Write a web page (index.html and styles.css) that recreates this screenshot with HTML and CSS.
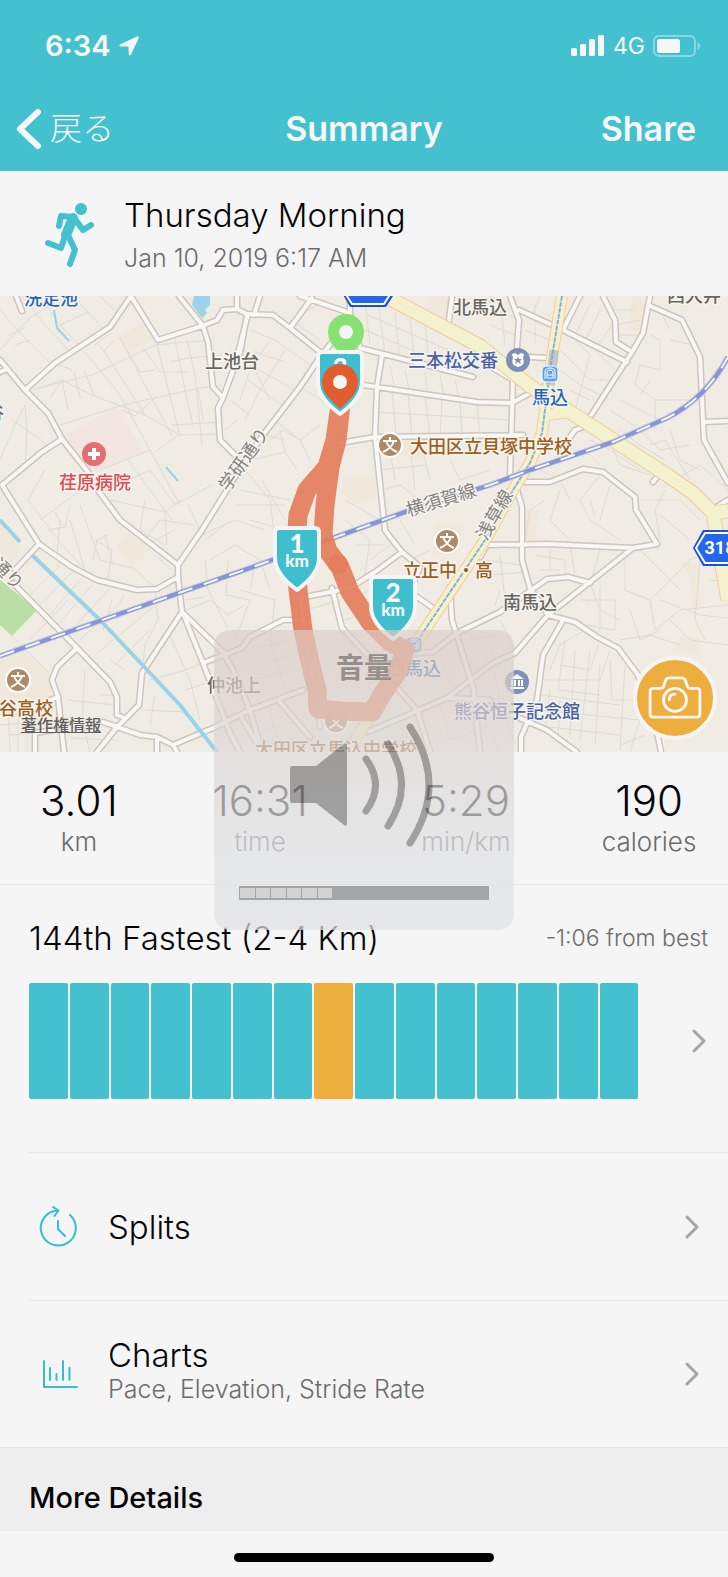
FILE: index.html
```html
<!DOCTYPE html>
<html lang="ja">
<head>
<meta charset="utf-8">
<meta name="viewport" content="width=device-width, initial-scale=1">
<title>Summary</title>
<link rel="stylesheet" href="styles.css">
</head>
<body>
<div class="screen">
  <header class="header">
    <div class="status">
      <div class="status-side">
        <span class="clock">6:34</span>
        <svg class="location" viewBox="0 0 20 20" aria-hidden="true"><path d="M18 .5 1 8.500Q-.5 10 1.500 10.500L9.500 10.500 9.800 18.500Q10.500 20.500 12 18.500L19.800 2Q20 0 18 .5Z"/></svg>
      </div>
      <div class="status-side">
        <svg class="signal" viewBox="0 0 34 22" aria-hidden="true"><rect x="0" y="13" width="6" height="8" rx="1.500"/><rect x="9" y="9" width="6" height="12" rx="1.500"/><rect x="18" y="4" width="6" height="17" rx="1.500"/><rect x="27" y="0" width="6" height="21" rx="1.500"/></svg>
        <span class="network">4G</span>
        <svg class="battery" viewBox="0 0 48 22" aria-hidden="true"><rect class="battery-shell" x="1" y="1" width="41" height="20" rx="5"/><rect x="4" y="4" width="23" height="14" rx="2.500"/><path class="battery-nub" d="M44.500 7q3 1.500 3 4t-3 4z"/></svg>
      </div>
    </div>
    <nav class="nav">
      <button class="back" type="button">
        <svg class="back-arrow" viewBox="0 0 26 42" aria-hidden="true"><path d="M22 4 4 21 22 38"/></svg>戻る</button>
      <h1 class="nav-title">Summary</h1>
      <button class="share" type="button">Share</button>
    </nav>
  </header>

  <main>
    <section class="activity">
      <svg class="runner" viewBox="0 0 52 66" aria-hidden="true">
        <circle cx="37" cy="8" r="6"/>
        <path class="torso" d="M29 17 22 34"/>
        <path class="limb" d="M30 16 17 15 15 25M31 18 39 29 47 24M22 32 17 47 4 42M24 34 31 49 26 63"/>
      </svg>
      <div>
        <h2 class="row-title">Thursday Morning</h2>
        <p class="row-note">Jan 10, 2019 6:17 AM</p>
      </div>
    </section>

    <section class="map" aria-label="Route map">
      <svg class="map-canvas" viewBox="0 296 728 456" preserveAspectRatio="xMidYMid slice">
        <defs>
          <path id="roads" d="M131 296 110 327 55 363 25 390M0 360 25 390 48 413 62 439 88 472 100 493 120 520 178 565M0 372 5 370M62 439 42 452 2 485 39 544 72 567 97 580 137 590 157 589 178 577M131 296 158 340 202 326 217 320 223 310 237 309 247 314 273 315 290 328 320 352M179 296 203 326 208 342 213 387 223 398M248 314 235 365 223 398 218 408 220 440 235 455M237 296V309M16 296 22 311M332 342 318 360 300 387 263 435 233 480 202 530 178 565 178 577 182 612 142 673 139 705 117 727 97 752M183 613 203 663 230 733 240 752M183 613 223 652 233 670 250 710 262 752M203 663 242 648 250 637 283 620 300 620M15 570 39 544M13 583 77 648 110 682 117 697 117 715 125 718M77 648 57 667 52 680 58 697 64 752M103 722 140 735 157 737 173 745 213 728 250 710 303 690M157 737V752M173 745 177 752M35 752V733L53 730M50 700 58 697M260 296 254 315M247 315 240 353M300 296 350 313 360 348 473 377M312 298 290 328M350 296V320M363 385 377 387 477 402 512 403 532 392M382 355 377 387 375 437 385 530 390 537 402 552 375 572 350 588 300 598M402 552 420 567 410 592 433 608M340 443 375 437 523 435M452 296 448 328M510 296 519 320 517 347M519 310 563 330 627 362M580 296 563 330M603 296 615 320 616 342 632 352M650 296 643 333 632 352 588 420M583 427 575 430 568 440M648 305 682 320 700 357 704 440 728 483M704 422 728 421M493 368 513 380 510 477M530 357 548 358M522 482 550 482 583 469 603 472 635 497 636 510 657 544M517 490 522 507 522 560 530 588 548 615M653 482 657 477M728 500 715 508M480 557 487 545 547 544 633 548 657 544M633 548 548 615 515 653 493 663 447 698 368 732M433 652 457 633 500 612 547 579 568 577 590 583M417 653 433 652M548 615 575 622 597 637 618 648 638 675 658 737 661 752M562 622 543 655 537 700 521 737V752M487 706 517 717 547 730 577 752M332 588 342 628 363 650 417 710 430 752M450 587 452 620 473 687 480 752M300 598 308 650 318 707 320 727M280 702 310 737M240 715 262 752M447 698 490 700"/>
          <path id="yellow" d="M385 296 480 346 530 386 567 410 667 475 693 493 713 513 728 600M713 513 728 511"/>
          <path id="avenue" d="M562 296 552 357 542 433 530 463 513 490 487 537 420 637 357 737 350 752M547 415 570 412"/>
          <path id="rail" d="M0 656 250 568 383 520 405 512 490 485 530 470 613 442 667 418Q706 398 728 357"/>
          <path id="shield" d="M-18 -28H18Q22 -28 22 -24V2Q22 18 0 34Q-22 18 -22 2V-24Q-22 -28 -18 -28Z"/>
          <path id="pin" d="M0 -18A18 18 0 0 1 18 0C18 12 8 18 0 27C-8 18-18 12-18 0A18 18 0 0 1 0-18Z"/>
          <g id="school"><circle r="12"/><path d="M-7-4H7M0-8V-4M-4-4Q-1 4 7 7M4-4Q1 4-7 7"/></g>
          <g id="station"><rect x="-8" y="-8" width="16" height="16" rx="4"/><path d="M-3 4V-2Q-3-4 0-4T3-2V4ZM-3 1H3M-5 5V-2Q-5-6 0-6T5-2V5"/></g>
        </defs>

        <rect class="land" y="296" width="728" height="456"/>
        <path class="block" d="M143 322 155 340 127 352 118 338ZM130 533 150 550 133 568 115 545ZM0 525 22 548 7 574 0 565ZM0 658 25 652 45 668 53 673 50 700 0 703ZM345 475 376 477V500L355 504 340 492ZM430 296H448V320L425 308ZM632 296H645L640 332 627 328ZM675 296H700L682 315ZM525 510H540L534 540H524ZM680 560 700 565V605L692 610 690 575ZM680 635 700 638V657L675 650ZM436 523 463 525 458 555H433ZM405 438H425L423 462 400 455Z"/>
        <path class="hospital-area" d="M117 407 144 452 88 473 63 437Z"/>
        <path class="park" d="M0 580 37 610 12 636 0 625Z"/>
        <path class="pond" d="M194 296 192 305 202 318 207 313 205 310 210 305V296Z"/>

        <path class="lanes" d="M0 310 22 335 50 363M8 336 25 328M15 345 30 340M22 296 45 325 70 352M40 296 60 325 88 312 75 298M60 325 80 346M88 312 104 330M0 350 30 318 58 300M100 296 118 314M95 345 108 335M88 333 104 351 115 340M85 352 120 395 150 450 180 505M104 351 145 415 180 435M120 338 172 436M55 363 72 370M25 392 50 385 92 375 155 345 212 340M40 388 62 380 92 395 145 415M50 398 62 380 68 410M74 372 80 398M84 370 94 395M60 425 117 407 145 400 200 388 222 385M128 352 140 372 155 370M143 348 160 372 188 372M157 345 180 436M170 362 188 358 222 355M175 340 185 390 193 425M187 340 195 375 202 445M198 388 203 420M172 425 222 422M180 435 218 434M155 452 178 435M122 410 135 416 156 397M0 460 15 425 25 405M25 405 27 430 25 470M12 420 50 446M100 470 150 450M128 460 172 520M105 490 150 470 175 505 212 485M110 500 165 512 180 500M140 545 160 520 195 525M165 512 167 545M188 505 200 530M45 470 28 500M28 500 62 545 95 580M62 525 55 512M40 520 95 480M47 530 65 527 70 505M70 520 85 570M95 540 112 550M112 550 108 580M57 555 60 520M80 505 100 560 133 568M133 568 158 590M93 560 97 540 108 535M105 535 113 565M145 500 140 530 165 545M145 545 175 530M155 555 172 570M25 600 60 565M35 610 72 572M45 620 83 577M55 628 92 585M67 635 110 588M12 636 48 672M30 640 68 600M80 640 118 605 125 595M95 655 140 618 155 605M115 665 150 630M103 630 112 600M155 590 158 620 145 645 142 673M182 612 210 600 228 615 245 605M185 600 205 597M205 560 208 590 228 628M228 560 226 595 250 600M170 636 190 680 200 720M150 680 185 670 203 663M185 690 215 680M145 710 185 712 200 735M125 670 110 660M85 670 82 720 90 752M100 695 115 695M68 700 115 705M65 720 103 722M70 738 115 740M0 715 35 712M0 725 30 723M8 705 10 752M18 712V752M27 712V752M35 733 10 735M150 725 155 695M210 560 235 545 260 560 270 590M190 540 235 520 265 530M240 490 290 500M245 470 270 500 275 540M262 480 285 520M235 505 285 505M250 520 285 530M205 540 225 525M250 460 285 452 297 470M270 440 283 430 300 440 310 460M285 452 280 430M263 435 285 440M300 387 330 405 340 430M275 420 300 440 320 425M318 360 340 370M250 330 275 340 310 365M255 352 285 362M250 365 295 390M248 380 285 407M270 340 250 370 240 400M285 350 260 390 245 420M230 400 250 415M238 420 225 430M240 340 270 400M320 340 290 320M330 330 345 342M300 315 325 300M365 300 370 345M378 300 385 355M395 312 400 360M410 318 415 365M425 325 430 370M368 315 448 350M365 330 440 362M390 365 395 390M405 370 410 395M425 372 428 400M440 375 445 400M455 380 460 402M378 395 372 437M392 390 396 435M408 394 412 435M425 397 430 437M442 400 440 437M460 402 462 435M477 404 480 435M375 412 510 420M390 450 395 480M410 445 415 490M450 460 460 480 490 470M380 470 425 465M382 490 400 485 420 500M420 440 430 480M540 296 530 320M525 330 550 340M485 296 495 310 519 320M490 325 515 335M500 300 505 345M535 305 535 345M590 305 575 335M600 310 585 342M612 325 595 350M635 310 612 310M640 320 615 325M640 335 615 335M575 340 590 355 575 410M590 345 615 370M560 350 590 380 615 380M560 370 580 385 600 395M570 390 590 400M650 335 660 340 660 370 640 365M640 365 635 385 655 400 690 400M650 380 640 395M620 400 660 420M610 410 640 430M655 400 655 430M670 340 692 345M660 310 670 330M605 430 620 465 650 475M620 430 640 445 665 460M640 430 660 450 690 445M670 430 680 460 700 470M650 445 665 440 690 480M675 480 700 465 728 490M590 440 610 450 640 470M550 450 590 455 600 465M540 470 560 480 570 500M600 475 580 500 590 520 620 540M560 490 550 520 570 540M610 485 600 520M640 500 680 500 700 520M660 515 690 540M665 490 655 510 660 540M590 500 595 515M545 500 530 510 525 540M485 560 520 565M490 575 525 572M500 590 495 605M500 555 505 600M535 555 565 560 565 580M540 570 560 570M550 545V570M570 545 575 575M600 550 590 583 600 610 620 620M625 555 625 590 650 600 690 560 728 540M640 550 660 570 680 590M650 600 655 630 680 610 728 605M660 600 700 615 728 618M670 620 690 640 728 645M700 560 695 620 705 640M710 580 728 582M600 585 600 630M580 600 615 600 615 630 585 625M575 590 590 605M630 610 640 640 660 630M620 640 650 635 680 645M585 630 560 645 550 670M600 640 590 670 560 665M610 650 600 680 545 680M565 640 558 690 600 695M575 650 570 735M590 650 580 740M600 665 595 745M610 660 612 700 640 700M625 665 620 750M540 695 620 705M538 710 640 720M530 725 620 735M550 690 545 730M560 700 558 740M640 720 630 752M645 735 620 745M485 640 495 660M500 620 515 650M470 640 500 635M455 640 480 680M440 660 460 700M495 675 500 700 515 745M485 720 500 752M400 720 405 752M415 715 450 740M440 705 450 740 480 730M385 740 410 752M345 640 310 640M340 670 370 660M350 690 380 680M340 600 300 612M350 600 370 590 400 580M345 620 375 610M250 650 290 640M255 665 295 655M250 680 300 670M270 640 285 690M230 690 260 730M250 735 300 720M268 705 280 750M390 545 370 560M400 520 415 545M410 560 430 550M345 520 370 540 365 575M320 545 280 560M355 545 385 545M345 500 380 520M240 590 275 600 270 640M250 600 235 640M255 560 250 590"/>

        <use href="#roads" class="road-casing"/>
        <use href="#roads" class="road"/>
        <path class="river" d="M0 520 20 542M32 555 100 620 150 673 180 705 217 752"/>
        <path class="creek" d="M54 310 57 328 69 341M166 467 178 481"/>
        <use href="#avenue" class="avenue-casing"/>
        <use href="#yellow" class="yellow-casing"/>
        <use href="#avenue" class="avenue"/>
        <use href="#yellow" class="yellow"/>
        <path class="metro" d="M562 296 552 357 542 433 530 463 513 490 487 537 420 637"/>
        <path class="metro-platform" d="M554 350 550 385"/>
        <use href="#rail" class="rail-shadow"/>
        <use href="#rail" class="rail"/>
        <use href="#rail" class="rail-dash"/>

        <g class="place">
          <text x="232" y="368">上池台</text>
          <text x="480" y="314">北馬込</text>
          <text x="694" y="302">西大井</text>
          <text x="-5" y="419">谷</text>
          <text x="530" y="609">南馬込</text>
          <text x="234" y="692">仲池上</text>
        </g>
        <g class="street">
          <text transform="translate(249 463) rotate(-55)">学研通り</text>
          <text transform="translate(443 506) rotate(-17)">横須賀線</text>
          <text transform="translate(500 518) rotate(-60)">浅草線</text>
          <text transform="translate(-3 572) rotate(45)">研通り</text>
        </g>
        <g class="transit">
          <text x="51" y="305">洗足池</text>
          <text x="550" y="404">馬込</text>
          <text x="414" y="675">西馬込</text>
        </g>
        <g class="civic">
          <text x="453" y="367">三本松交番</text>
          <text x="517" y="718">熊谷恒子記念館</text>
        </g>
        <g class="education">
          <text x="491" y="453">大田区立貝塚中学校</text>
          <text x="448" y="577">立正中・高</text>
          <text x="26" y="715">谷高校</text>
          <text x="336" y="756">大田区立馬込中学校</text>
        </g>
        <text class="hospital" x="95" y="489">荏原病院</text>

        <use href="#school" class="school" x="390" y="445"/>
        <use href="#school" class="school" x="447" y="541"/>
        <use href="#school" class="school" x="18" y="680"/>
        <use href="#school" class="school" x="336" y="721"/>
        <use href="#station" class="station" x="550" y="374"/>
        <use href="#station" class="station" x="414" y="645"/>
        <g transform="translate(94 454)"><circle class="hospital-dot" r="12"/><path class="hospital-cross" d="M-6 0H6M0-6V6"/></g>
        <g transform="translate(518 360)"><circle class="civic-dot" r="12"/><path class="civic-glyph" d="M-6-6-3-7 0-5 3-7 6-6 5-2Q8 5 0 7-8 5-5-2Z"/><path class="civic-star" d="M0-4 1-1 4-1 2 1 3 4 0 2-3 4-2 1-4-1-1-1Z"/></g>
        <g transform="translate(517 682)"><circle class="civic-dot" r="12"/><path class="civic-glyph" d="M0-8 7-3H-7ZM-6-2H-4V4H-6ZM-3-2H-1V4H-3ZM1-2H3V4H1ZM4-2H6V4H4ZM-7 5H7V7H-7Z"/></g>

        <g class="route-sign">
          <path class="sign-edge" d="M342 293 350 307H386L395 293Z"/>
          <path class="sign-line" d="M345 293 352 304H384L391 293Z"/>
          <path class="sign-edge" d="M703 530H760V566H703L693 548Z"/>
          <path class="sign-line" d="M705 533H760V563H705L696 548Z"/>
          <text x="720" y="554">318</text>
        </g>

        <path class="route" d="M340 405 335 440 327 467 307 490 298 515 297 530 296 560 298 590 303 630 310 662 317 690 318 709 340 711 372 712 383 693 397 673 405 650 390 642 370 622 350 592 340 567 328 551 323 535 325 505 330 467 337 440 341 405"/>
        <circle class="route-bump" cx="338" cy="564" r="10"/>

        <g transform="translate(346 332)"><use href="#pin" class="pin-start"/><circle class="pin-hole" r="7"/></g>
        <g transform="translate(340 380)"><use href="#shield" class="marker"/><text class="marker-number" y="-3">3</text></g>
        <g transform="translate(340 382)"><use href="#pin" class="pin-end"/><circle class="pin-hole" r="7"/></g>
        <g transform="translate(297 556)"><use href="#shield" class="marker"/><text class="marker-number" y="-3">1</text><text class="marker-unit" y="11">km</text></g>
        <g transform="translate(393 605)"><use href="#shield" class="marker"/><text class="marker-number" y="-3">2</text><text class="marker-unit" y="11">km</text></g>
      </svg>
      <a class="legal" href="#">著作権情報</a>
      <button class="camera" type="button" aria-label="Add photo">
        <svg viewBox="0 0 54 46" aria-hidden="true"><path d="M4 13H12Q14 13 15 11L17 5Q18 2 21 2H34Q37 2 38 5L40 11Q41 13 43 13H50Q53 13 53 16V40Q53 43 50 43H4Q1 43 1 40V16Q1 13 4 13Z"/><circle cx="27" cy="25" r="12"/><path d="M21 25Q21 19 27 19"/></svg>
      </button>
    </section>

    <section class="stats">
      <div class="stat"><strong>3.01</strong><span>km</span></div>
      <div class="stat"><strong>16:31</strong><span>time</span></div>
      <div class="stat"><strong>5:29</strong><span>min/km</span></div>
      <div class="stat"><strong>190</strong><span>calories</span></div>
    </section>

    <section class="ranking">
      <div class="ranking-head">
        <h2 class="row-title">144th Fastest (2-4 Km)</h2>
        <span class="ranking-note">-1:06 from best</span>
      </div>
      <a class="ranking-body" href="#" aria-label="Ranking history">
        <span class="bars">
          <i></i><i></i><i></i><i></i><i></i><i></i><i></i><i class="current"></i><i></i><i></i><i></i><i></i><i></i><i></i><i></i>
        </span>
        <svg class="chevron" viewBox="0 0 14 24" aria-hidden="true"><path d="M2 2 12 12 2 22"/></svg>
      </a>
    </section>

    <a class="row" href="#">
      <svg class="row-icon" viewBox="0 0 40 42" aria-hidden="true"><path d="M32 9A17.500 17.500 0 1 1 20 4.500M15 1 20.500 4.500 16.500 10M20 15V23L27 30"/></svg>
      <span class="row-text"><span class="row-title">Splits</span></span>
      <svg class="chevron" viewBox="0 0 14 24" aria-hidden="true"><path d="M2 2 12 12 2 22"/></svg>
    </a>
    <a class="row" href="#">
      <svg class="row-icon" viewBox="0 0 40 42" aria-hidden="true"><path d="M6 8V34H39M12 15V27M18.500 21V27M25 8V27M31.500 15V27"/></svg>
      <span class="row-text"><span class="row-title">Charts</span><span class="row-note">Pace, Elevation, Stride Rate</span></span>
      <svg class="chevron" viewBox="0 0 14 24" aria-hidden="true"><path d="M2 2 12 12 2 22"/></svg>
    </a>
    <h2 class="section-title">More Details</h2>
  </main>

  <footer class="home"><span class="home-bar"></span></footer>

  <aside class="volume">
    <h2 class="volume-title">音量</h2>
    <svg class="speaker" viewBox="0 0 150 130" aria-hidden="true">
      <path class="speaker-body" d="M3 45H27L55 23Q58 21 58 24V103Q58 106 55 104L27 82H3Q1 82 1 80V47Q1 45 3 45Z"/>
      <path class="speaker-wave" d="M77 38Q96 64 77 90M99 23Q126 64 99 105M121 6Q159 64 121 122"/>
    </svg>
    <div class="level" role="meter" aria-label="音量" aria-valuemin="0" aria-valuemax="16" aria-valuenow="6"><i></i><i></i><i></i><i></i><i></i><i></i></div>
  </aside>
</div>
</body>
</html>
```
FILE: styles.css
```css
* { box-sizing: border-box; }

:root {
  --teal: #44c1cf;
  --paper: #f5f5f5;
  --line: #e9e9ea;
  --muted: #6c6c6c;
  --orange: #eeae3e;
}

body {
  margin: 0;
  background: var(--paper);
  color: #060606;
  font-family: Inter, "Noto Sans CJK JP", sans-serif;
  font-weight: 300;
}

h1, h2, p { margin: 0; font-weight: inherit; }
button { padding: 0; border: 0; background: none; color: inherit; font: inherit; cursor: pointer; }
a { color: inherit; text-decoration: none; }

.screen { position: relative; overflow: hidden; }

/* Header */
.header { background: var(--teal); color: #f7f7f7; }
.status {
  display: flex;
  justify-content: space-between;
  height: 86px;
  padding: 25px 27px 20px 45px;
}
.status svg { fill: currentColor; }
.status-side { display: flex; align-items: center; gap: 8px; }
.clock { font-size: 29px; font-weight: 600; }
.network { font-size: 23px; font-weight: 400; }
.location { width: 20px; height: 20px; }
.signal { width: 34px; height: 22px; }
.battery { width: 48px; height: 22px; }
.status .battery-shell { fill: none; stroke: currentColor; stroke-width: 2; opacity: .4; }
.battery-nub { opacity: .4; }

.nav {
  display: grid;
  grid-template-columns: 1fr auto 1fr;
  align-items: center;
  height: 85px;
  padding: 0 32px 0 16px;
}
.back {
  display: flex;
  align-items: center;
  gap: 8px;
  justify-self: start;
  font-size: 32px;
  line-height: 42px;
}
.back-arrow { width: 26px; height: 42px; fill: none; stroke: currentColor; stroke-width: 6; stroke-linecap: round; stroke-linejoin: round; }
.nav-title, .share { font-size: 34px; font-weight: 600; }
.nav-title { padding-left: 16px; }
.share { justify-self: end; }

/* Activity */
.activity { display: flex; align-items: center; gap: 28px; height: 125px; padding: 0 44px; }
.runner { width: 52px; height: 66px; fill: var(--teal); }
.runner path { fill: none; stroke: var(--teal); stroke-linecap: round; stroke-linejoin: round; }
.runner .torso { stroke-width: 10; }
.runner .limb { stroke-width: 6; }
.row-title { display: block; font-size: 33px; line-height: 40px; }
.row-note { display: block; color: var(--muted); font-size: 25px; line-height: 28px; }
.activity .row-note { padding-top: 9px; }

/* Map */
.map { position: relative; height: 456px; overflow: hidden; }
.map-canvas { display: block; width: 100%; height: 100%; }
.map-canvas path, .map-canvas use { stroke-linejoin: round; }
.land { fill: #f0ece4; }
.block { fill: #f1e8dc; }
.hospital-area { fill: #f3e5e2; }
.park { fill: #b9dfa6; }
.pond { fill: #9bd3ea; }
.lanes { fill: none; stroke: #dfdcd3; stroke-width: 1; }
.road-casing { fill: none; stroke: #d0c4bb; stroke-width: 7; stroke-linecap: round; }
.road { fill: none; stroke: #f7f7f6; stroke-width: 4; stroke-linecap: round; }
.river { fill: none; stroke: #97d3ea; stroke-width: 4; }
.creek { fill: none; stroke: #97d3ea; stroke-width: 2; }
.yellow-casing { fill: none; stroke: #f1cd98; stroke-width: 15; }
.yellow { fill: none; stroke: #f3f1ce; stroke-width: 13; }
.avenue-casing { fill: none; stroke: #f1cd98; stroke-width: 12; }
.avenue { fill: none; stroke: #f3f1ce; stroke-width: 10; }
.metro { fill: none; stroke: #8fb0cf; stroke-width: 2; stroke-dasharray: 5 1; }
.metro-platform { fill: none; stroke: #8f9fc0; stroke-opacity: .5; stroke-width: 9; }
.rail-shadow { fill: none; stroke: #c3cbd8; stroke-width: 6; }
.rail { fill: none; stroke: #8793da; stroke-width: 4; }
.rail-dash { fill: none; stroke: #f7f7fb; stroke-width: 2; stroke-dasharray: 15 12; }

.map-canvas text {
  font-family: "Noto Sans CJK JP", sans-serif;
  font-size: 18px;
  font-weight: 500;
  text-anchor: middle;
  paint-order: stroke;
  stroke: #f6f4ef;
  stroke-width: 3;
  stroke-linejoin: round;
}
.place { fill: #686663; }
.map-canvas .street text { fill: #85827f; font-weight: 400; }
.transit { fill: #2566b4; }
.civic { fill: #4963a6; }
.education { fill: #9c5f1d; }
.hospital { fill: #e14b51; }
.school { fill: #b08a66; stroke: #fff; stroke-width: 2; }
.station { fill: #5da2ea; stroke: #fff; stroke-width: 1; }
.hospital-dot { fill: #e46f72; }
.hospital-cross { stroke: #fff; stroke-width: 4; }
.civic-dot, .civic-star { fill: #7e8fba; }
.civic-glyph { fill: #fff; }

.sign-edge { fill: #1b50d8; }
.sign-line { fill: #2467ee; stroke: #fff; stroke-width: 2; }
.map-canvas .route-sign text { fill: #fff; stroke: none; font-family: Roboto, sans-serif; font-weight: 700; }

.route { fill: none; stroke: #e47e5c; stroke-width: 19; stroke-opacity: .92; stroke-linecap: round; }
.route-bump { fill: #e47e5c; }
.pin-start { fill: #88e173; }
.pin-end { fill: #e15d2d; }
.pin-hole { fill: #f5f5f5; }
.marker { fill: #3fbfce; stroke: #f5f5f5; stroke-width: 4; }
.map-canvas .marker-number,
.map-canvas .marker-unit { fill: #f7f7f7; stroke: none; font-family: Lato, sans-serif; font-weight: 900; }
.map-canvas .marker-number { font-size: 26px; }
.map-canvas .marker-unit { font-size: 17px; }

.legal {
  position: absolute;
  left: 21px;
  bottom: 16px;
  color: #62605d;
  font: 500 16px/24px "Noto Sans CJK JP", sans-serif;
  text-decoration: underline;
}
.camera {
  position: absolute;
  right: 11px;
  bottom: 12px;
  display: grid;
  place-items: center;
  width: 84px;
  height: 84px;
  border: 4px solid var(--paper);
  border-radius: 50%;
  background: var(--orange);
}
.camera svg { width: 52px; height: 44px; overflow: visible; fill: none; stroke: #f7f7f7; stroke-width: 3; stroke-linecap: round; }

/* Stats */
.stats {
  display: grid;
  grid-template-columns: 158fr 204fr 208fr 158fr;
  padding: 25px 0;
  border-bottom: 1px solid var(--line);
  text-align: center;
}
.stat strong { display: block; font-size: 42px; font-weight: 300; line-height: 48px; }
.stat span { display: block; color: var(--muted); font-size: 26px; line-height: 34px; }

/* Ranking */
.ranking { margin-left: 29px; padding: 33px 20px 53px 0; border-bottom: 1px solid var(--line); }
.ranking-head { display: flex; align-items: center; justify-content: space-between; }
.ranking-note { color: var(--muted); font-size: 23px; }
.ranking-body { display: flex; align-items: center; justify-content: space-between; margin-top: 25px; padding-right: 2px; }
.bars { display: flex; gap: 2px; width: 90%; height: 116px; }
.bars i { flex: 1; border-radius: 2px; background: var(--teal); }
.bars .current { background: var(--orange); }
.chevron { flex: none; width: 14px; height: 24px; fill: none; stroke: #a6a6a6; stroke-width: 3; stroke-linecap: round; stroke-linejoin: round; }

/* Rows */
.row { display: flex; align-items: center; gap: 30px; height: 147px; margin-left: 29px; padding: 0 29px 0 9px; }
.row + .row { border-top: 1px solid var(--line); }
.row-icon { flex: none; width: 40px; height: 42px; fill: none; stroke: #34bfce; stroke-width: 2; stroke-linecap: round; stroke-linejoin: round; }
.row-text { flex: 1; }
.row-text .row-note { padding-bottom: 10px; }

.section-title {
  padding: 30px 29px 12px;
  border: solid #e8e8e8;
  border-width: 1px 0;
  background: #eee;
  font-size: 29px;
  font-weight: 500;
  line-height: 40px;
}

.home { display: flex; justify-content: center; padding: 22px 0 17px; }
.home-bar { width: 260px; height: 9px; border-radius: 5px; background: #000; }

/* Volume overlay */
.volume {
  position: absolute;
  top: 630px;
  left: 50%;
  display: flex;
  flex-direction: column;
  align-items: center;
  width: 300px;
  height: 300px;
  margin-left: -150px;
  padding: 18px 25px 30px;
  border-radius: 16px;
  background: linear-gradient(#dccdc8b0, #dcd8d6b0 45%, #e0e1e4b4 75%);
}
.volume-title { color: #968f8a; font-size: 28px; font-weight: 700; line-height: 40px; }
.speaker { width: 150px; height: 130px; margin-top: 33px; }
.speaker-body { fill: #000; fill-opacity: .3; }
.speaker-wave { fill: none; stroke: #000; stroke-opacity: .3; stroke-width: 7; stroke-linecap: round; }
.level {
  display: grid;
  grid-template-columns: repeat(16, 1fr);
  gap: 1px;
  width: 100%;
  height: 14px;
  margin-top: auto;
  padding: 2px 1px;
  background: #a3a5a7;
}
.level i { background: #d2d2d2; }
```
